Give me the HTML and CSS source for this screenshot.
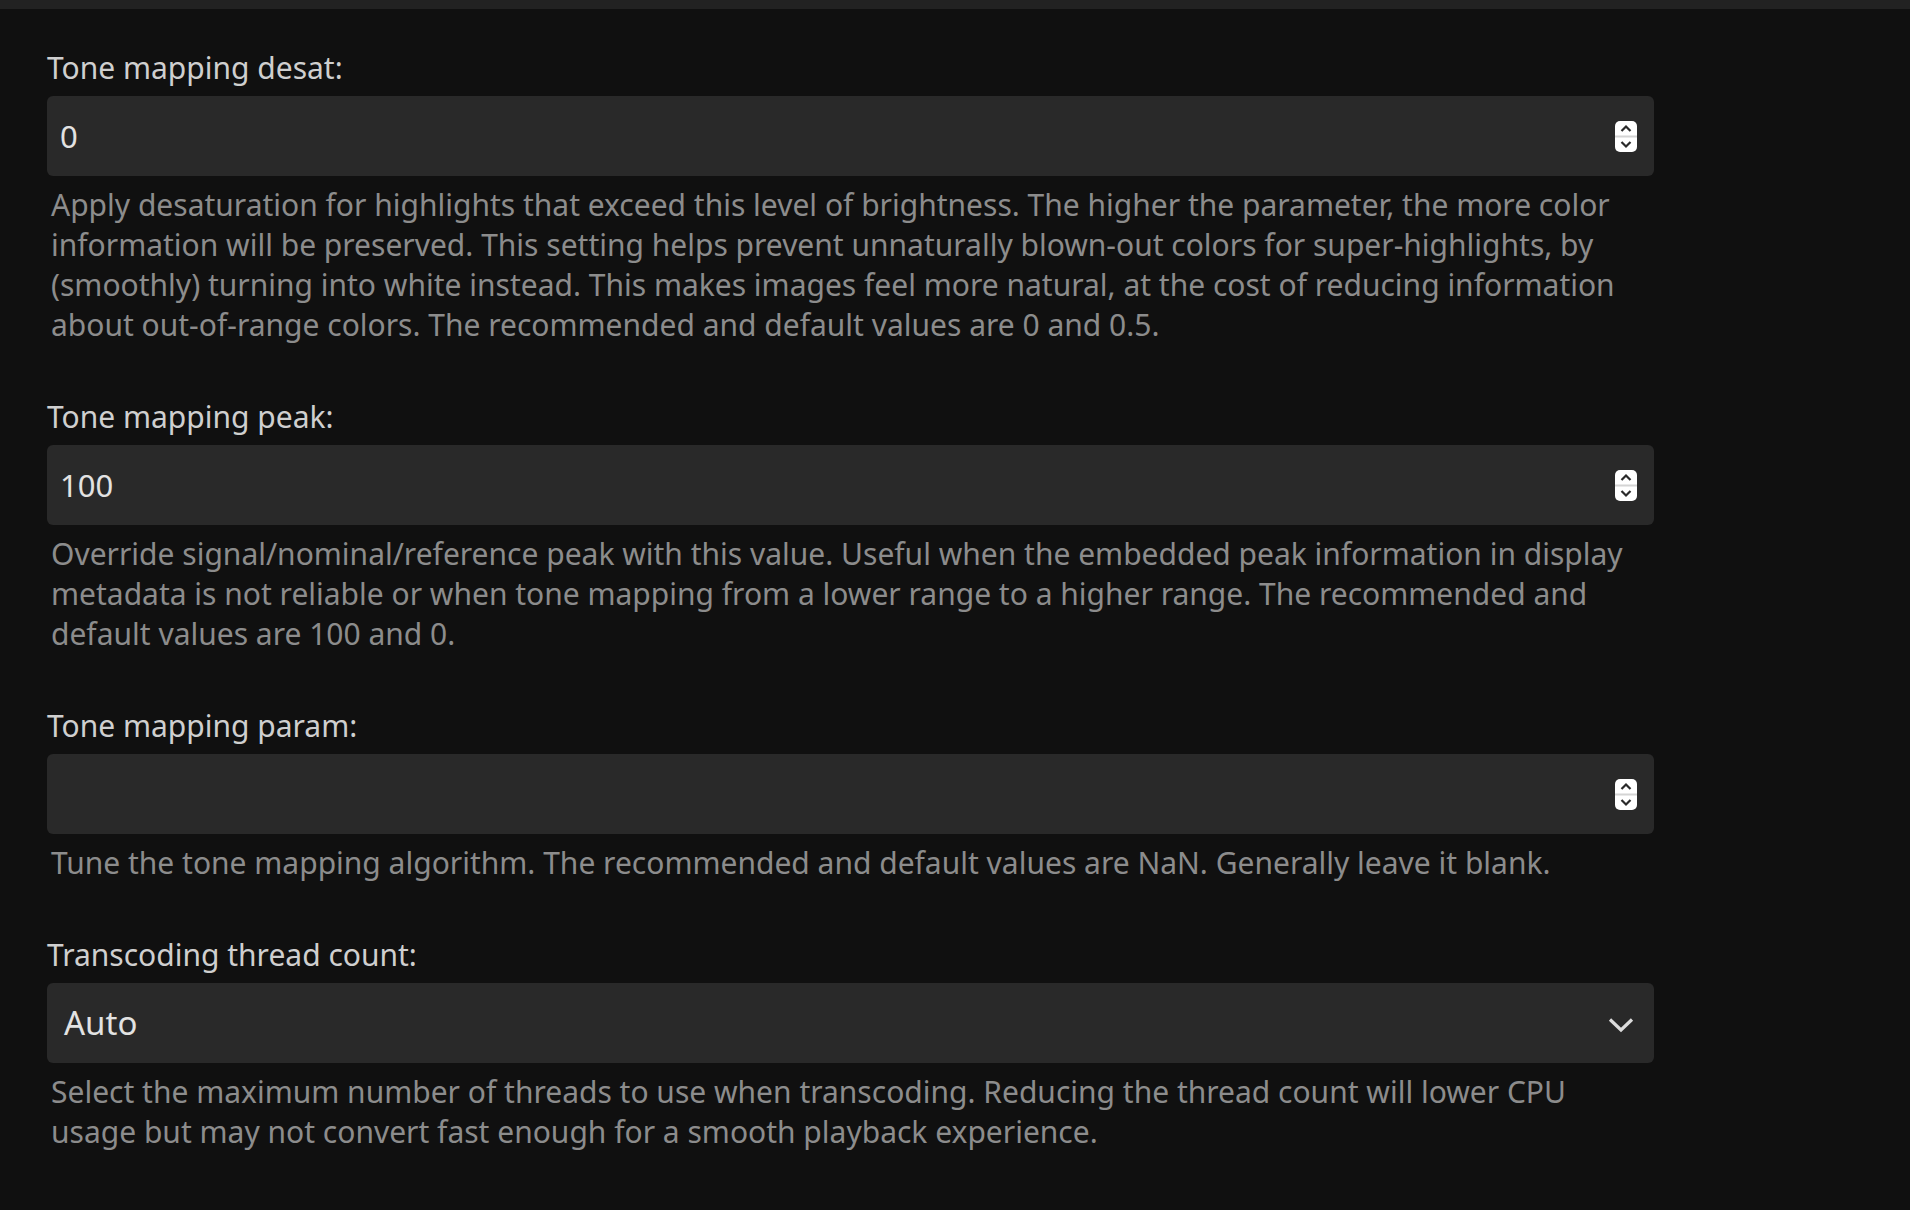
FILE: index.html
```html
<!DOCTYPE html>
<html lang="en">
<head>
<meta charset="utf-8">
<title>Transcoding settings</title>
<link rel="stylesheet" href="styles.css">
</head>
<body>
<div class="topbar"></div>
<main class="content">
  <div class="field">
    <label class="field-label">Tone mapping desat:</label>
    <div class="input-box">
      <span class="input-value">0</span>
      <svg class="spinner" width="22" height="31" viewBox="0 0 22 31"><rect x="0" y="0" width="22" height="31" rx="5" fill="#fff"/><rect x="0" y="14.5" width="22" height="2" fill="#d4d4d4"/><path d="M6.5 10 L11 5.5 L15.5 10" fill="none" stroke="#2a2a2a" stroke-width="2.2"/><path d="M6.5 21 L11 25.5 L15.5 21" fill="none" stroke="#2a2a2a" stroke-width="2.2"/></svg>
    </div>
    <p class="field-desc">Apply desaturation for highlights that exceed this level of brightness. The higher the parameter, the more color information will be preserved. This setting helps prevent unnaturally blown-out colors for super-highlights, by (smoothly) turning into white instead. This makes images feel more natural, at the cost of reducing information about out-of-range colors. The recommended and default values are 0 and 0.5.</p>
  </div>
  <div class="field">
    <label class="field-label">Tone mapping peak:</label>
    <div class="input-box">
      <span class="input-value">100</span>
      <svg class="spinner" width="22" height="31" viewBox="0 0 22 31"><rect x="0" y="0" width="22" height="31" rx="5" fill="#fff"/><rect x="0" y="14.5" width="22" height="2" fill="#d4d4d4"/><path d="M6.5 10 L11 5.5 L15.5 10" fill="none" stroke="#2a2a2a" stroke-width="2.2"/><path d="M6.5 21 L11 25.5 L15.5 21" fill="none" stroke="#2a2a2a" stroke-width="2.2"/></svg>
    </div>
    <p class="field-desc">Override signal/nominal/reference peak with this value. Useful when the embedded peak information in display metadata is not reliable or when tone mapping from a lower range to a higher range. The recommended and default values are 100 and 0.</p>
  </div>
  <div class="field">
    <label class="field-label">Tone mapping param:</label>
    <div class="input-box">
      <span class="input-value"></span>
      <svg class="spinner" width="22" height="31" viewBox="0 0 22 31"><rect x="0" y="0" width="22" height="31" rx="5" fill="#fff"/><rect x="0" y="14.5" width="22" height="2" fill="#d4d4d4"/><path d="M6.5 10 L11 5.5 L15.5 10" fill="none" stroke="#2a2a2a" stroke-width="2.2"/><path d="M6.5 21 L11 25.5 L15.5 21" fill="none" stroke="#2a2a2a" stroke-width="2.2"/></svg>
    </div>
    <p class="field-desc">Tune the tone mapping algorithm. The recommended and default values are NaN. Generally leave it blank.</p>
  </div>
  <div class="field">
    <label class="field-label">Transcoding thread count:</label>
    <div class="input-box select-box">
      <span class="select-value">Auto</span>
      <svg class="chevron" width="26" height="16" viewBox="0 0 26 16"><path d="M2 2.5 L13 13 L24 2.5" fill="none" stroke="#dcdcdc" stroke-width="3.2"/></svg>
    </div>
    <p class="field-desc">Select the maximum number of threads to use when transcoding. Reducing the thread count will lower CPU usage but may not convert fast enough for a smooth playback experience.</p>
  </div>
</main>
</body>
</html>
```
FILE: styles.css
```css
html, body {
  margin: 0;
  padding: 0;
  background: #101010;
  height: 100%;
}
body {
  font-family: "Noto Sans", "Open Sans", sans-serif;
  color: #d0d0d0;
  overflow: hidden;
}
.topbar {
  height: 9px;
  background: #222222;
}
.content {
  width: 1607px;
  margin-left: 47px;
  padding-top: 39px;
}
.field {
  display: flex;
  flex-direction: column;
  margin-bottom: 52px;
}
.field-label {
  font-size: 30px;
  line-height: 40px;
  color: #cfcfcf;
  margin-bottom: 8px;
}
.input-box {
  height: 80px;
  background: #292929;
  border-radius: 6px;
  display: flex;
  align-items: center;
  justify-content: space-between;
  padding: 0 17px 0 13px;
  box-sizing: border-box;
}
.input-value {
  font-size: 31px;
  color: #e2e2e2;
  line-height: 40px;
}
.spinner {
  display: block;
  flex: none;
}
.select-box {
  padding: 0 20px 0 17px;
}
.select-value {
  font-size: 33px;
  color: #e2e2e2;
  line-height: 40px;
}
.chevron {
  display: block;
  flex: none;
  margin-top: 4px;
}
.field-desc {
  margin: 9px 0 0 0;
  padding-left: 4px;
  font-size: 30px;
  line-height: 40px;
  color: #8c8c8c;
}
```
